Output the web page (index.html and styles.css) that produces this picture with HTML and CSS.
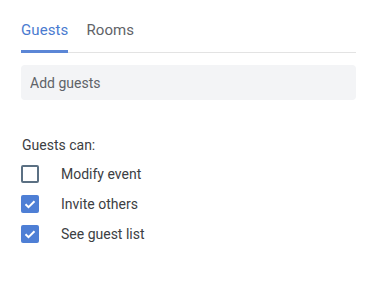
FILE: index.html
```html
<!DOCTYPE html>
<html>
	<head>
		<meta charset="utf-8">
		<title>Guests</title>
		<link rel="stylesheet" href="styles.css">
	</head>
	<body>
		<div class="panel">
			<div class="tabs">
				<a href="javascript:;" class="tab active">Guests</a>
				<a href="javascript:;" class="tab">Rooms</a>
			</div>
			<input class="add" type="text" placeholder="Add guests">
			<p class="label">Guests can:</p>
			<ul class="perms">
				<li><span class="box"></span>Modify event</li>
				<li><span class="box on"><svg viewBox="0 0 18 18" width="18" height="18"><path d="M4.5 9.2l3 3 6-6" fill="none" stroke="#fff" stroke-width="2"/></svg></span>Invite others</li>
				<li><span class="box on"><svg viewBox="0 0 18 18" width="18" height="18"><path d="M4.5 9.2l3 3 6-6" fill="none" stroke="#fff" stroke-width="2"/></svg></span>See guest list</li>
			</ul>
		</div>
	</body>
</html>
```

FILE: styles.css
```css
* {margin:0; padding:0; box-sizing:border-box;}
li {list-style:none;}
body {
	background:#fff;
	font-family: Roboto, "Noto Sans", sans-serif;
	font-size:14px;
	color:#3c4043;
}
.panel {
	padding:18px 20px 0 21px;
}
.tabs {
	display:flex;
	gap:18px;
	border-bottom:1px solid #e3e3e3;
}
.tab {
	text-decoration:none;
	color:#5f6368;
	line-height:20px;
	padding:2px 0 10px;
	border-bottom:3px solid transparent;
	margin-bottom:-1px;
	font-size:15px;
	letter-spacing:0.1px;
}
.tab.active {
	color:#4a7bd0;
	border-bottom-color:#5b86d6;
	border-radius:2px 2px 0 0;
}
.add {
	display:block;
	width:100%;
	height:35px;
	margin-top:12px;
	border:none;
	outline:none;
	border-radius:4px;
	background:#f3f4f6;
	padding:0 9px;
	font-family: Roboto, "Noto Sans", sans-serif;
	font-size:14px;
	color:#3c4043;
}
.add::placeholder {color:#5f6368;}
.label {
	margin-top:35px;
	line-height:20px;
	padding-left:1px;
}
.perms {
	margin-top:4px;
}
.perms li {
	display:flex;
	align-items:center;
	gap:22px;
	height:30px;
	line-height:20px;
}
.box {
	width:18px;
	height:18px;
	border:2px solid #5b7083;
	border-radius:2px;
	display:flex;
}
.box.on {
	border:none;
	background:#4e7fd5;
}
```
